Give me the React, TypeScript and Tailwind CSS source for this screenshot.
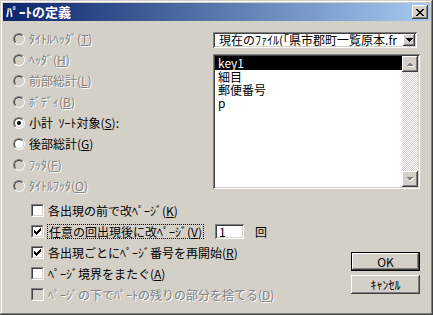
import React from "react";

const raised =
  "shadow-[inset_-1px_-1px_#404040,inset_1px_1px_#ffffff,inset_-2px_-2px_#808080]";
const sunken =
  "shadow-[inset_1px_1px_#808080,inset_-1px_-1px_#ffffff,inset_2px_2px_#404040,inset_-2px_-2px_#d4d0c8]";
const dis = "text-[#808080] [text-shadow:1px_1px_0_#ffffff]";

function Radio({ checked, disabled }: { checked?: boolean; disabled?: boolean }) {
  return (
    <span className="flex w-[12px] h-[12px] shrink-0 rounded-full border border-t-[#808080] border-l-[#808080] border-r-white border-b-white">
      <span
        className={`flex flex-1 items-center justify-center rounded-full border border-t-[#404040] border-l-[#404040] border-r-[#d4d0c8] border-b-[#d4d0c8] ${
          disabled ? "bg-[#d4d0c8]" : "bg-white"
        }`}
      >
        {checked && <span className="w-[4px] h-[4px] rounded-full bg-black" />}
      </span>
    </span>
  );
}

function Check({ checked, disabled }: { checked?: boolean; disabled?: boolean }) {
  return (
    <span className="flex w-[13px] h-[13px] shrink-0 border border-t-[#808080] border-l-[#808080] border-r-white border-b-white">
      <span
        className={`flex flex-1 items-center justify-center border border-t-[#404040] border-l-[#404040] border-r-[#d4d0c8] border-b-[#d4d0c8] ${
          disabled ? "bg-[#d4d0c8]" : "bg-white"
        }`}
      >
        {checked && (
          <svg width="7" height="7" viewBox="0 0 7 7" shapeRendering="crispEdges">
            <path
              d="M0 2h1v1h1v1h1V3h1V2h1V1h1V0h1v3h-1v1h-1v1h-1v1h-1v1H2V6H1V5H0z"
              fill="#000"
            />
          </svg>
        )}
      </span>
    </span>
  );
}

function ArrowBtn({ up }: { up?: boolean }) {
  return (
    <div className={`w-[16px] h-[16px] bg-[#d4d0c8] flex items-center justify-center ${raised}`}>
      <svg width="8" height="5" viewBox="0 0 8 5" shapeRendering="crispEdges">
        {up ? (
          <>
            <path d="M1 5h7L4.5 1.5z" fill="#ffffff" />
            <path d="M0 4h7L3.5 0.5z" fill="#808080" />
          </>
        ) : (
          <>
            <path d="M1 1h7L4.5 4.5z" fill="#ffffff" />
            <path d="M0 0h7L3.5 3.5z" fill="#808080" />
          </>
        )}
      </svg>
    </div>
  );
}

const radios: { label: React.ReactNode; checked?: boolean; disabled?: boolean }[] = [
  { label: <>ﾀｲﾄﾙﾍｯﾀﾞ(<u>T</u>)</>, disabled: true },
  { label: <>ﾍｯﾀﾞ(<u>H</u>)</>, disabled: true },
  { label: <>前部総計(<u>L</u>)</>, disabled: true },
  { label: <>ﾎﾞﾃﾞｨ(<u>B</u>)</>, disabled: true },
  { label: <>小計&nbsp;&nbsp;ｿｰﾄ対象(<u>S</u>):</>, checked: true },
  { label: <>後部総計(<u>G</u>)</> },
  { label: <>ﾌｯﾀ(<u>F</u>)</>, disabled: true },
  { label: <>ﾀｲﾄﾙﾌｯﾀ(<u>O</u>)</>, disabled: true },
];

export default function App() {
  return (
    <div
      className={`w-[433px] h-[315px] bg-[#d4d0c8] p-[3px] flex flex-col font-['Noto_Sans_CJK_JP','Noto_Sans',sans-serif] text-[12px] leading-[14px] text-black shadow-[inset_-1px_-1px_#404040,inset_1px_1px_#d4d0c8,inset_-2px_-2px_#808080,inset_2px_2px_#ffffff] overflow-hidden`}
    >
      {/* title bar */}
      <div className="h-[18px] shrink-0 flex items-center justify-between pl-[3px] pr-[2px] bg-[linear-gradient(to_right,#0a246a,#a6caf0)]">
        <span className="text-white font-bold text-[13px] leading-[14px]">ﾊﾟｰﾄの定義</span>
        <div className={`w-[16px] h-[14px] bg-[#d4d0c8] flex items-center justify-center ${raised}`}>
          <svg width="8" height="7" viewBox="0 0 8 7" shapeRendering="crispEdges">
            <path
              d="M0 0h2v1h1v1h2V1h1V0h2v1H7v1H6v1H5v1h1v1h1v1h1v1H6V6H5V5H3v1H2v1H0V6h1V5h1V4h1V3H2V2H1V1H0z"
              fill="#000"
            />
          </svg>
        </div>
      </div>

      {/* body */}
      <div className="flex-1 flex flex-col">
        <div className="flex">
          {/* radios */}
          <div className="w-[210px] pt-[7px] pl-[10px] flex flex-col">
            {radios.map((r, i) => (
              <div key={i} className="h-[21px] flex items-center gap-[4px]">
                <Radio checked={r.checked} disabled={r.disabled} />
                <span className={`whitespace-nowrap ${r.disabled ? dis : ""}`}>{r.label}</span>
              </div>
            ))}
          </div>

          {/* right column */}
          <div className="pt-[11px] flex flex-col">
            <div className={`w-[204px] h-[16px] bg-white flex items-center p-[2px] ${sunken}`}>
              <span className="flex-1 overflow-hidden whitespace-nowrap pl-[4px] leading-[12px]">
                現在のﾌｧｲﾙ(｢県市郡町一覧原本.fr
              </span>
              <div className={`w-[12px] h-[12px] bg-[#d4d0c8] flex items-center justify-center ${raised}`}>
                <svg width="7" height="4" viewBox="0 0 7 4" shapeRendering="crispEdges">
                  <path d="M0 0h7v1H6v1H5v1H4v1H3V3H2V2H1V1H0z" fill="#000" />
                </svg>
              </div>
            </div>

            <div className={`mt-[6px] w-[207px] h-[135px] bg-white p-[2px] flex ${sunken}`}>
              <div className="flex-1 flex flex-col">
                <div className="h-[14px] bg-black text-white pl-[3px] leading-[14px]">key1</div>
                <div className="h-[13px] pl-[3px] leading-[13px]">細目</div>
                <div className="h-[13px] pl-[3px] leading-[13px]">郵便番号</div>
                <div className="h-[13px] pl-[3px] leading-[13px]">p</div>
              </div>
              <div className="w-[16px] flex flex-col bg-[repeating-conic-gradient(#d4d0c8_0_25%,#ffffff_0_50%)] bg-[length:2px_2px]">
                <ArrowBtn up />
                <div className="flex-1" />
                <ArrowBtn />
              </div>
            </div>
          </div>
        </div>

        {/* bottom section */}
        <div className="flex mt-[4px]">
          <div className="flex-1 pl-[28px] flex flex-col">
            <div className="h-[21px] flex items-center gap-[4px]">
              <Check />
              <span className="whitespace-nowrap">各出現の前で改ﾍﾟｰｼﾞ(<u>K</u>)</span>
            </div>
            <div className="h-[21px] flex items-center">
              <Check checked />
              <span className="ml-[3px] whitespace-nowrap border border-dotted border-black px-[1px] leading-[13px]">
                任意の回出現後に改ﾍﾟｰｼﾞ(<u>V</u>)
              </span>
              <div className={`ml-[11px] w-[29px] h-[15px] bg-white flex items-center pl-[4px] leading-[11px] ${sunken}`}>
                1
              </div>
              <span className="ml-[11px]">回</span>
            </div>
            <div className="h-[21px] flex items-center gap-[4px]">
              <Check checked />
              <span className="whitespace-nowrap">各出現ごとにﾍﾟｰｼﾞ番号を再開始(<u>R</u>)</span>
            </div>
            <div className="h-[21px] flex items-center gap-[4px]">
              <Check />
              <span className="whitespace-nowrap">ﾍﾟｰｼﾞ境界をまたぐ(<u>A</u>)</span>
            </div>
            <div className="h-[21px] flex items-center gap-[4px]">
              <Check disabled />
              <span className={`whitespace-nowrap ${dis}`}>
                ﾍﾟｰｼﾞの下でﾊﾟｰﾄの残りの部分を捨てる(<u>D</u>)
              </span>
            </div>
          </div>

          <div className="w-[69px] mr-[10px] pt-[52px] flex flex-col gap-[4px]">
            <div className="h-[19px] border border-black">
              <div className={`h-full bg-[#d4d0c8] flex items-center justify-center ${raised}`}>OK</div>
            </div>
            <div className={`h-[19px] bg-[#d4d0c8] flex items-center justify-center ${raised}`}>ｷｬﾝｾﾙ</div>
          </div>
        </div>
      </div>
    </div>
  );
}
